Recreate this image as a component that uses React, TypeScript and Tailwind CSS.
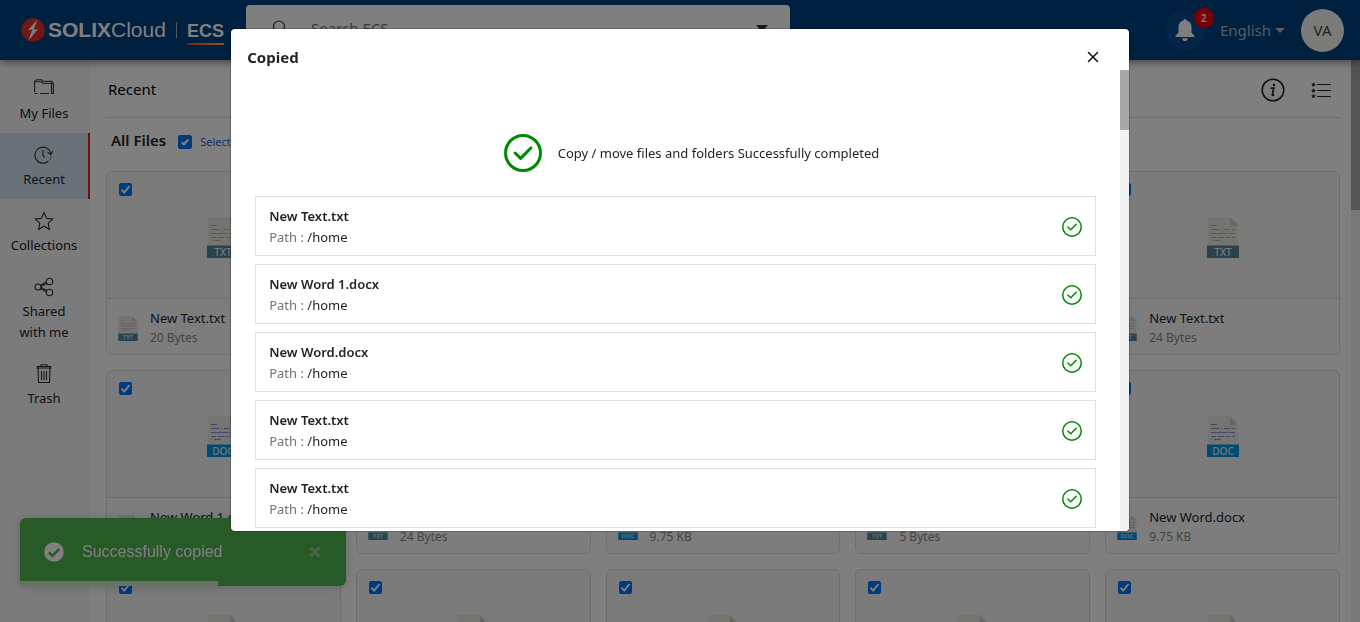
import type { ReactNode } from 'react';
import { X } from 'lucide-react';

type Kind = 'TXT' | 'DOC';
type FileItem = { name: string; size: string; kind: Kind };

const files: FileItem[] = [
  { name: 'New Text.txt', size: '20 Bytes', kind: 'TXT' },
  { name: 'New Word 1.docx', size: '9.75 KB', kind: 'DOC' },
  { name: 'New Word.docx', size: '9.75 KB', kind: 'DOC' },
  { name: 'New Text.txt', size: '5 Bytes', kind: 'TXT' },
  { name: 'New Text.txt', size: '24 Bytes', kind: 'TXT' },
  { name: 'New Word 1.docx', size: '9.75 KB', kind: 'DOC' },
  { name: 'New Text.txt', size: '24 Bytes', kind: 'TXT' },
  { name: 'New Word.docx', size: '9.75 KB', kind: 'DOC' },
  { name: 'New Text.txt', size: '5 Bytes', kind: 'TXT' },
  { name: 'New Word.docx', size: '9.75 KB', kind: 'DOC' },
  { name: 'New Text.txt', size: '20 Bytes', kind: 'TXT' },
  { name: 'New Text.txt', size: '24 Bytes', kind: 'TXT' },
  { name: 'New Word.docx', size: '9.75 KB', kind: 'DOC' },
  { name: 'New Text.txt', size: '5 Bytes', kind: 'TXT' },
  { name: 'New Text.txt', size: '24 Bytes', kind: 'TXT' },
];

const copied = ['New Text.txt', 'New Word 1.docx', 'New Word.docx', 'New Text.txt', 'New Text.txt', 'New Word.docx'];

function FileIcon({ kind, className }: { kind: Kind; className: string }) {
  const line = kind === 'TXT' ? '#b9b3a6' : '#8c8fd0';
  return (
    <svg viewBox="0 0 32 41" className={className} aria-hidden="true">
      <path d="M.5 0H23l8.500 9V29H.5z" fill="#e9e9e0" />
      <path d="M23 0l8.500 9H23z" fill="#d0cfc0" />
      <path
        d="M4 8.500h6M4 12.500h8M14 12.500h1M17 12.500h6M25 12.500h3M4 16.500h17M22 16.500h6M4 20.500h5M10.500 20.500h7M19 20.500h4M25 20.500h3M4 23.500h1M7 23.500h7"
        stroke={line}
        strokeWidth="1.200"
      />
      <path d="M0 28.500h32V41H0z" fill={kind === 'TXT' ? '#52889c' : '#0096e6'} />
      <text x="16" y="38.500" textAnchor="middle" fontFamily="'Noto Sans', sans-serif" fontWeight="500" fontSize="10" fill="#f0f0f0">
        {kind}
      </text>
    </svg>
  );
}

function Check({ label, small }: { label: string; small?: boolean }) {
  return (
    <span className={small ? 'relative flex size-[14px] shrink-0' : 'relative flex size-[13px] shrink-0'}>
      <input
        type="checkbox"
        defaultChecked
        id={label}
        aria-label={label}
        className="peer size-full appearance-none rounded-xs border border-[#0075ff] bg-white checked:bg-[#0075ff]"
      />
      <svg viewBox="0 0 13 13" className="pointer-events-none absolute inset-0 hidden size-full peer-checked:block" aria-hidden="true">
        <path d={small ? 'M3.500 6.700l2 2 4-4.500' : 'M2.500 6.800l2.800 2.800 5.200-6.600'} fill="none" stroke="#fff" strokeWidth="2" />
      </svg>
    </span>
  );
}

function FileCard({ file, index }: { file: FileItem; index: number }) {
  return (
    <article className="flex flex-col overflow-hidden rounded-md border border-[#dcdcdc] bg-[#f7f7f7]">
      <div className="flex h-[127px] flex-col border-b border-[#dcdcdc] px-3 pt-[11px]">
        <Check label={`Select file ${index + 1}`} />
        <FileIcon kind={file.kind} className="mt-[21px] h-[41px] w-8 self-center" />
      </div>
      <div className="flex h-[55px] items-center gap-3 bg-[#fbfbfb] pl-[11px]">
        <FileIcon kind={file.kind} className="mt-1 h-[25px] w-5" />
        <div className="flex flex-col pt-[2px]">
          <h3 className="text-[13px] leading-5 text-[#212529]">{file.name}</h3>
          <p className="text-[12px] leading-5 text-[#888]">{file.size}</p>
        </div>
      </div>
    </article>
  );
}

function LineIcon({ children }: { children: ReactNode }) {
  return (
    <svg viewBox="0 0 20 20" className="size-5" fill="none" stroke="#333" strokeWidth="1.100" aria-hidden="true">
      {children}
    </svg>
  );
}

const nav: { label: string; active?: boolean; icon: ReactNode }[] = [
  {
    label: 'My Files',
    icon: (
      <LineIcon>
        <path d="M.6 13.500V2.200L2.300.8h5.200l1.500 1.500h9V4.200h1.400V14.500h-1.900M.6 14.500h3M6 14.500h9M17.500 14.500V4.200H8.600L7.200 2.700H1.500" />
      </LineIcon>
    ),
  },
  {
    label: 'Recent',
    active: true,
    icon: (
      <LineIcon>
        <path d="M16.800 8.500A8 8 0 1 0 14.500 16M16 14.500l.6-1M17 12l.2-1M8.900 5v5.500l2 1.800M13.500 7.300l3.300 2.200 2-3.500" />
      </LineIcon>
    ),
  },
  {
    label: 'Collections',
    icon: (
      <LineIcon>
        <path d="M10 1.500l2.600 5.700 6.200.7-4.600 4.200 1.200 6.200L10 15.200l-5.400 3.100 1.200-6.200L1.200 7.900l6.200-.7z" />
      </LineIcon>
    ),
  },
  {
    label: 'Shared with me',
    icon: (
      <LineIcon>
        <circle cx="4" cy="10" r="3" />
        <circle cx="15.500" cy="4.500" r="3.200" />
        <circle cx="15.500" cy="15.500" r="3.200" />
        <path d="M6.500 8.300l6-3.200M7 9.600l6-3M6.500 11.700l6 3.200M7 10.400l6 3" />
      </LineIcon>
    ),
  },
  {
    label: 'Trash',
    icon: (
      <LineIcon>
        <path d="M2.500 4h15M3.500 4V2.500h13V4M7 2.500V.8h6v1.700M4 4.500l.5 14h11l.5-14M7.500 7v9M10 7v9M12.500 7v9" />
      </LineIcon>
    ),
  },
];

function CircleCheck({ className, stroke }: { className: string; stroke: number }) {
  return (
    <svg viewBox="0 0 24 24" className={className} fill="none" stroke="#008a00" strokeWidth={stroke} aria-hidden="true">
      <circle cx="12" cy="12" r={12 - stroke / 2} />
      <path d="M7 12l3.500 3.400 6.500-6.600" strokeLinecap="round" strokeLinejoin="round" />
    </svg>
  );
}

function Header() {
  return (
    <header className="relative z-10 flex h-[60px] shrink-0 items-center bg-[#004080] pr-4 pl-[21px] shadow-[0_2px_8px_rgba(0,0,0,0.5)]">
      <a href="#home" className="flex w-[225px] shrink-0 items-center font-['Liberation_Sans',sans-serif] text-white">
        <svg viewBox="0 0 24 24" className="mr-[3px] size-6" aria-hidden="true">
          <circle cx="12" cy="12" r="11.800" fill="#e0302c" />
          <path d="M16.500 1.500L7 12.300l4.300-.7L7.500 22.500 17 11l-4.500.8z" fill="#fff" />
        </svg>
        <span className="text-[21px] leading-6 font-bold">SOLIX</span>
        <span className="text-[21px] leading-6">Cloud</span>
        <span className="mx-[10px] h-4 w-px bg-[#a0b0c0]" />
        <span className="flex flex-col pt-1 text-[18px] leading-6 font-bold">
          ECS
          <span className="h-[2px] bg-linear-to-r from-[#f04030] to-[#f8b848]" />
        </span>
      </a>
      <div className="mb-1 flex h-[46px] w-[40vw] shrink-0 items-center rounded-sm bg-white pr-[22px] pl-[26px]">
        <svg viewBox="0 0 16 16" className="size-4" fill="none" stroke="#333" strokeWidth="1.200" aria-hidden="true">
          <circle cx="7" cy="6.500" r="5.500" />
          <path d="M11 10.500l4 5" />
        </svg>
        <label htmlFor="search" className="sr-only">Search</label>
        <input id="search" placeholder="Search ECS" className="ml-[23px] min-w-0 flex-1 text-[15px] outline-none placeholder:text-[#6c757d]" />
        <button aria-label="Search options">
          <svg viewBox="0 0 12 8" className="h-2 w-3" aria-hidden="true">
            <path d="M0 1h12L6 8z" fill="#333" />
          </svg>
        </button>
      </div>
      <div className="ml-auto flex items-center">
        <button aria-label="Notifications" className="relative flex size-10 items-center justify-center rounded-full bg-[#0b4a90]">
          <svg viewBox="0 0 20 22" className="h-[22px] w-5" aria-hidden="true">
            <path d="M10 0a1.500 1.500 0 0 1 1.500 1.600C15 2.500 16.500 5 16.500 8v5.500L19.500 17v1H.5v-1l3-3.500V8c0-3 1.500-5.500 5-6.400A1.500 1.500 0 0 1 10 0zM7.200 19.300h5.600a2.800 2.800 0 0 1-5.600 0z" fill="#fff" />
          </svg>
          <span className="absolute -top-[2px] -right-[9px] flex size-5 items-center justify-center rounded-full bg-[#f00000] text-[10px] font-semibold text-white">2</span>
        </button>
        <button className="ml-[15px] flex items-center gap-1 text-[15px] text-[#a8b8c8]">
          English
          <svg viewBox="0 0 10 5" className="h-[5px] w-[10px]" aria-hidden="true">
            <path d="M0 0h10L5 5z" fill="#a8b8c8" />
          </svg>
        </button>
        <button className="ml-4 flex size-[43px] items-center justify-center rounded-full bg-[#f7f7f2] text-[15px] text-[#444]">VA</button>
      </div>
    </header>
  );
}

export default function App() {
  return (
    <div className="flex h-screen flex-col overflow-hidden bg-white font-['Noto_Sans',sans-serif] text-[#212529]">
      <Header />
      <div className="flex min-h-0 flex-1">
        <nav className="flex w-[90px] shrink-0 flex-col bg-[#f7f7f7] pt-[7px]">
          {nav.map((n) => (
            <a
              key={n.label}
              href="#nav"
              className={
                n.active
                  ? 'flex flex-col items-center gap-1 border-r-2 border-[#e02020] bg-[#d7e3f3] pt-3 pb-[9px] text-center text-[13px] leading-[21px]'
                  : 'flex flex-col items-center gap-1 border-r-2 border-transparent pt-3 pb-[9px] text-center text-[13px] leading-[21px]'
              }
            >
              {n.icon}
              <span className="max-w-[70px]">{n.label}</span>
            </a>
          ))}
        </nav>
        <main className="min-w-0 flex-1 overflow-hidden pr-[11px] pl-4">
          <div className="flex h-[58px] items-center justify-between border-b border-[#dcdcdc] pt-[2px] pr-[9px] pl-[2px]">
            <h1 className="text-[15px] text-black">Recent</h1>
            <div className="flex items-center gap-[26px]">
              <button aria-label="Details">
                <svg viewBox="0 0 24 24" className="size-6" fill="none" stroke="#222" aria-hidden="true">
                  <circle cx="12" cy="12" r="10.800" strokeWidth="1.500" />
                  <path d="M9.700 10.200h3.100l-1.500 6.500c-.2 1 .8.800 1.900-.3" strokeWidth="1.700" />
                  <circle cx="13" cy="7" r="1.300" fill="#222" stroke="none" />
                </svg>
              </button>
              <button aria-label="List view">
                <svg viewBox="0 0 20 16" className="h-4 w-5" aria-hidden="true">
                  <path d="M6 2.500h14M6 8.500h14M6 14.500h14" stroke="#222" strokeWidth="1.200" />
                  {[2.5, 8.5, 14].map((y) => (
                    <path key={y} transform={`translate(2.500 ${y})`} d="M0-2.400L.7-.7 2.400-.6 1.100.5 1.500 2.200 0 1.300-1.500 2.200-1.100.5-2.400-.6-.7-.7z" fill="#222" />
                  ))}
                </svg>
              </button>
            </div>
          </div>
          <div className="flex h-[53px] items-start gap-3 pt-[10px] pl-[5px]">
            <h2 className="text-[15px] leading-6 font-semibold">All Files</h2>
            <div className="flex h-7 items-center gap-2">
              <Check label="Select all files" small />
              <label htmlFor="Select all files" className="text-[11px] leading-4 text-[#1a66d0]">Select All</label>
            </div>
          </div>
          <div className="grid grid-cols-5 gap-[15px]">
            {files.map((f, i) => (
              <FileCard key={i} file={f} index={i} />
            ))}
          </div>
        </main>
        <div className="w-[9px] shrink-0 bg-[#f1f1f1]" aria-hidden="true">
          <div className="h-[150px] bg-[#a8a8a8]" />
        </div>
      </div>

      <div role="status" className="fixed bottom-9 left-5 z-20 flex h-[68px] w-[326px] items-center overflow-hidden rounded-md bg-[#50b450] px-6 font-['Liberation_Sans',sans-serif] text-white shadow-[0_1px_10px_rgba(0,0,0,0.2)]">
        <svg viewBox="0 0 20 20" className="size-5" aria-hidden="true">
          <circle cx="10" cy="10" r="9.800" fill="#fff" />
          <path d="M4.800 10.300l3.500 3.500 7-7" fill="none" stroke="#50b450" strokeWidth="2.500" />
        </svg>
        <span className="ml-[18px] text-[16px]">Successfully copied</span>
        <button aria-label="Dismiss" className="ml-auto">
          <X className="size-[14px] text-[#95ce95]" strokeWidth={5} />
        </button>
        <span className="absolute bottom-0 left-0 h-[5px] w-[198px] bg-white/70" />
      </div>

      <div className="fixed inset-0 z-30 flex items-start justify-center bg-black/50 pt-[29px]">
        <section role="dialog" aria-labelledby="dialog-title" className="flex max-h-[calc(100vh-120px)] w-[66%] flex-col overflow-hidden rounded-sm bg-white shadow-[0_0_0_1px_rgba(0,0,0,0.2)]">
          <div className="flex h-[41px] shrink-0 items-end justify-between pr-[27px] pl-4">
            <h2 id="dialog-title" className="text-[15px] leading-[25px] font-bold">Copied</h2>
            <button aria-label="Close" className="flex h-[26px] items-center">
              <X className="size-[18px] text-[#111]" strokeWidth={2} />
            </button>
          </div>
          <div className="flex min-h-0 flex-1">
            <div className="min-w-0 flex-1 overflow-hidden px-6 pt-16">
              <div className="mb-6 flex items-center justify-center gap-4 pl-8">
                <CircleCheck className="size-[38px]" stroke={1.9} />
                <p className="pt-[2px] text-[13px]">Copy / move files and folders Successfully completed</p>
              </div>
              <ul className="flex flex-col gap-2">
                {copied.map((name, i) => (
                  <li key={i} className="flex h-[60px] items-center justify-between border border-[#dee2e6] px-[13px] pt-[2px]">
                    <div className="text-[13px] leading-[21px]">
                      <p className="font-semibold">{name}</p>
                      <p>
                        <span className="text-[#6c757d]">Path : </span>/home
                      </p>
                    </div>
                    <CircleCheck className="size-5" stroke={1.8} />
                  </li>
                ))}
              </ul>
            </div>
            <div className="w-[9px] shrink-0 bg-[#f1f1f1]" aria-hidden="true">
              <div className="h-[60px] bg-[#a8a8a8]" />
            </div>
          </div>
        </section>
      </div>
    </div>
  );
}
